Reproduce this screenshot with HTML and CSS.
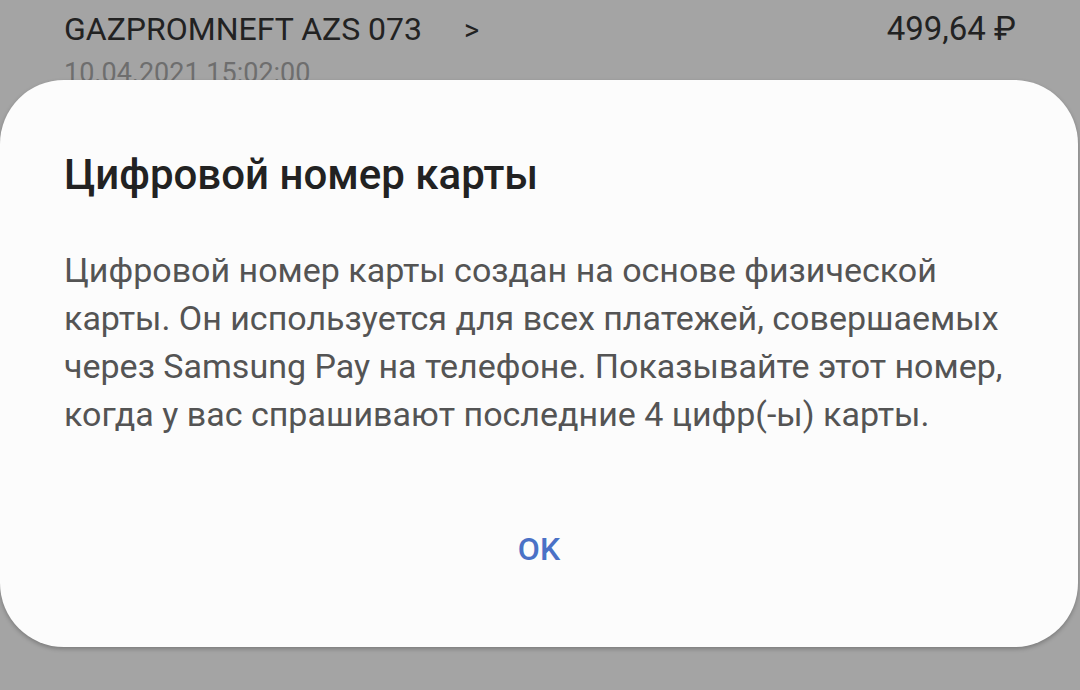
FILE: index.html
```html
<!DOCTYPE html>
<html lang="ru">
<head>
<meta charset="utf-8">
<link rel="stylesheet" href="styles.css">
</head>
<body>
<div class="screen">
  <header class="txn">
    <div class="txn-row">
      <div class="txn-name">GAZPROMNEFT AZS 073<span class="txn-arrow">&gt;</span></div>
      <div class="txn-amount">499,64 ₽</div>
    </div>
    <div class="txn-date">10.04.2021 15:02:00</div>
  </header>
  <section class="dialog">
    <h1 class="dialog-title">Цифровой номер карты</h1>
    <p class="dialog-text">Цифровой номер карты создан на основе физической карты. Он используется для всех платежей, совершаемых через Samsung Pay на телефоне. Показывайте этот номер, когда у вас спрашивают последние 4 цифр(-ы) карты.</p>
    <div class="dialog-actions">
      <button class="dialog-btn">OK</button>
    </div>
  </section>
</div>
</body>
</html>
```

FILE: styles.css
```css
* { box-sizing: border-box; }
html, body {
  margin: 0;
  padding: 0;
  width: 1080px;
  height: 690px;
  overflow: hidden;
  background: #a4a4a4;
  font-family: Roboto, "Noto Sans", sans-serif;
}
.screen {
  width: 1080px;
  height: 690px;
  display: flex;
  flex-direction: column;
}
.txn {
  height: 80px;
  overflow: hidden;
  padding: 9px 64px 0 64px;
  flex: none;
}
.txn-row {
  display: flex;
  justify-content: space-between;
  align-items: baseline;
  height: 40px;
  line-height: 40px;
}
.txn-name {
  font-size: 32px;
  color: #222;
}
.txn-arrow {
  margin-left: 42px;
  font-size: 29px;
}
.txn-amount {
  font-size: 33px;
  color: #222;
}
.txn-date {
  margin-top: 6px;
  font-size: 27px;
  line-height: 36px;
  color: #6e6e6e;
}
.dialog {
  flex: none;
  width: 1078px;
  height: 567px;
  background: #fcfcfc;
  border-radius: 64px;
  box-shadow: 0 2px 4px rgba(0,0,0,0.25);
  padding: 70px 64px 0 64px;
  display: flex;
  flex-direction: column;
}
.dialog-title {
  margin: 0;
  font-size: 42px;
  line-height: 50px;
  font-weight: 500;
  color: #222;
}
.dialog-text {
  margin: 46px 0 0 0;
  font-size: 34px;
  line-height: 48px;
  color: #545454;
}
.dialog-actions {
  margin-top: 87px;
  display: flex;
  justify-content: center;
}
.dialog-btn {
  border: none;
  background: none;
  padding: 0;
  font-family: Roboto, "Noto Sans", sans-serif;
  font-size: 32px;
  line-height: 48px;
  font-weight: 500;
  color: #4a71c6;
}
```
